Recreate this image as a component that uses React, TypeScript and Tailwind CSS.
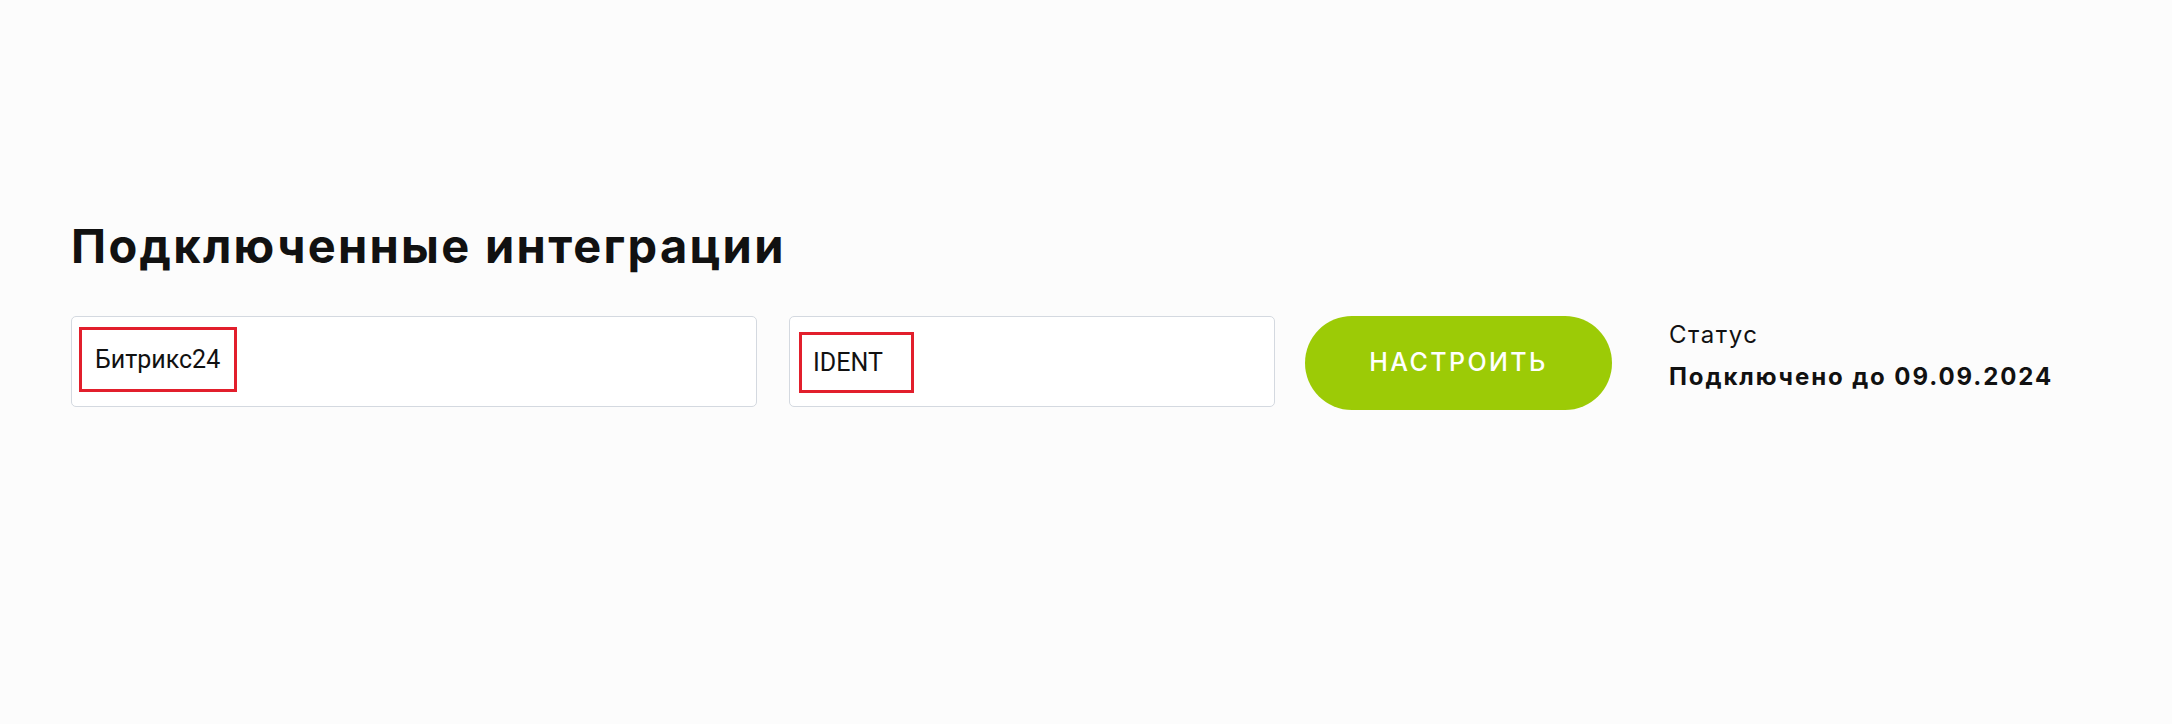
import React from "react";

const FieldBox = ({
  label,
  boxClass,
  wrapClass,
}: {
  label: string;
  boxClass: string;
  wrapClass: string;
}) => {
  return (
    <div
      className={`h-[91px] rounded-[5px] border border-[#d4d9e0] bg-white ${wrapClass}`}
    >
      <div
        className={`flex items-center border-[3px] border-[#e21f2c] font-['Roboto',sans-serif] text-[25px] leading-none text-[#111] ${boxClass}`}
      >
        {label}
      </div>
    </div>
  );
};

const App = () => {
  return (
    <div className="min-h-screen w-full bg-[#fcfcfc] pl-[71px] pt-[216px]">
      <h2 className="font-['Inter',sans-serif] text-[47px] font-bold leading-[60px] tracking-[2.3px] text-[#111]">
        Подключенные интеграции
      </h2>

      <div className="mt-[40px] flex items-start">
        <FieldBox
          label="Битрикс24"
          wrapClass="w-[686px] pl-[7px] pt-[10px]"
          boxClass="h-[65px] w-[158px] pl-[13px]"
        />
        <FieldBox
          label="IDENT"
          wrapClass="ml-[32px] w-[486px] pl-[9px] pt-[15px]"
          boxClass="h-[61px] w-[115px] pl-[11px]"
        />

        <button className="ml-[30px] h-[94px] w-[307px] rounded-full bg-[#9ccb06] font-['Inter',sans-serif] text-[25px] font-medium tracking-[2.4px] text-white">
          НАСТРОИТЬ
        </button>

        <div className="ml-[57px] pt-[4px] font-['Inter',sans-serif] text-[#111]">
          <div className="text-[24px] leading-[30px] tracking-[1.5px]">Статус</div>
          <div className="mt-[12px] text-[24px] font-bold leading-[30px] tracking-[1.9px]">
            Подключено до 09.09.2024
          </div>
        </div>
      </div>
    </div>
  );
};

export default App;
